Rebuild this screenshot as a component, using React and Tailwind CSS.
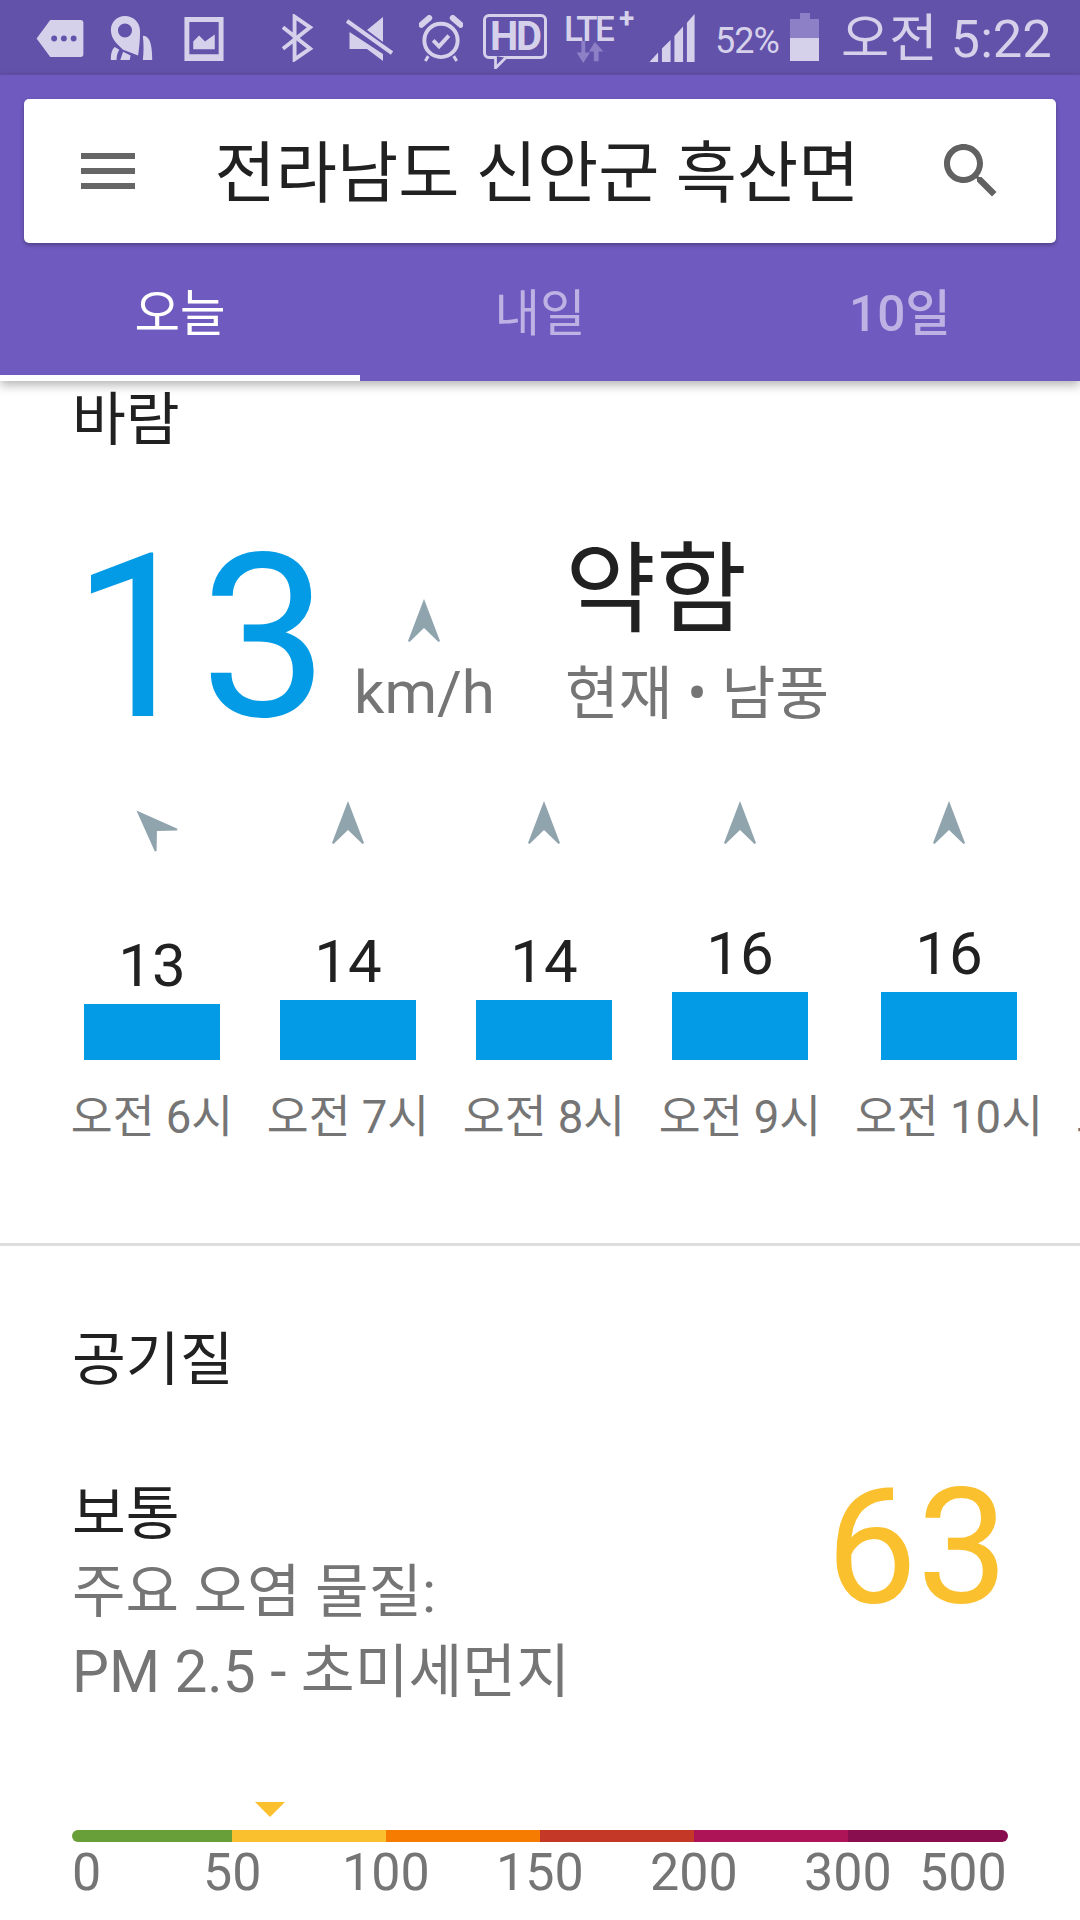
const FONT = "font-['Roboto','Noto_Sans_CJK_KR',sans-serif]";

function Arrow({ className = "", rotate = 0 }) {
  return (
    <svg viewBox="0 0 36 46" className={className} style={{ transform: `rotate(${rotate}deg)` }}>
      <path d="M18 1 L34 43 L32.5 44 L18 30 L3.5 44 L2 43 Z" fill="#90A4AE" />
    </svg>
  );
}

function StatusIcons() {
  const c = "#D6D1EA";
  return (
    <>
      <svg viewBox="0 0 50 40" className="absolute left-[35px] top-[19px] w-[50px] h-[39px]">
        <path d="M15 1 H46 a3 3 0 0 1 3 3 V36 a3 3 0 0 1 -3 3 H15 L1 20 Z" fill={c} />
        <circle cx="19" cy="20" r="3" fill="#6252AA" /><circle cx="29" cy="20" r="3" fill="#6252AA" /><circle cx="39" cy="20" r="3" fill="#6252AA" />
      </svg>
      <svg viewBox="0 0 46 50" className="absolute left-[110px] top-[15px] w-[45px] h-[47px]">
        <path fillRule="evenodd" d="M15 1 C6 1 0 8 0 16 C0 26 8 32 13 37 L29 43 C30 35 31 28 31 17 C31 8 24 1 15 1 Z M15 9 a7.5 7.5 0 1 1 0 15 a7.5 7.5 0 0 1 0 -15 Z" fill={c} />
        <path d="M34 22 C41 22 44 30 44 48 H34 C35 40 35 30 34 22 Z M4 34 C0 38 0 44 0 48 H6 C6 44 7 40 9 37 Z M13 39 L10 48 H20 L21 43 Z" fill={c} />
      </svg>
      <svg viewBox="0 0 40 45" className="absolute left-[184px] top-[17px] w-[40px] h-[44px]">
        <path fillRule="evenodd" d="M0 0 H40 V45 H0 Z M5 5 V38 H35 V5 Z" fill={c} />
        <path d="M9 33 V25 L15 19 L21 25 L31 18 V33 Z" fill={c} />
      </svg>
      <svg viewBox="0 0 34 48" className="absolute left-[281px] top-[14px] w-[33px] h-[48px]" fill="none" stroke={c} strokeWidth="4">
        <path d="M2 13 L30 35 L14 46 V2 L30 13 L2 35" />
      </svg>
      <svg viewBox="0 0 47 46" className="absolute left-[346px] top-[16px] w-[47px] h-[46px]">
        <path d="M37 1 V26 L21 14 Z M3.5 16 V33 H21 L37 45 V38 L3.5 16 Z" fill={c} />
        <path d="M1 5 L46 37" stroke={c} strokeWidth="4" />
      </svg>
      <svg viewBox="0 0 44 48" className="absolute left-[419px] top-[15px] w-[44px] h-[47px]" fill="none" stroke={c}>
        <circle cx="22" cy="26" r="17" strokeWidth="4" />
        <path d="M14 26 L20 32 L30 21" strokeWidth="4" />
        <path d="M2 10 L10 3 M34 3 L42 10" strokeWidth="6" strokeLinecap="round" />
        <path d="M9 42 L6 47 M35 42 L38 47" strokeWidth="3" />
      </svg>
      <div className="absolute left-[483px] top-[14px] w-[64px] h-[45px] border-[3px] border-[#D6D1EA] rounded-[6px] flex items-center justify-center text-[#D6D1EA] text-[40px] font-bold leading-none tracking-[-2px] font-['Roboto',sans-serif]">HD</div>
      <svg viewBox="0 0 16 14" className="absolute left-[494px] top-[56px] w-[16px] h-[13px]">
        <path d="M1 0 V13 L12 2" fill="#6252AA" stroke={c} strokeWidth="3" />
      </svg>
      <div className="absolute left-[564px] top-[13px] text-[#D6D1EA] text-[35px] font-medium leading-[34px] tracking-[-2.5px] font-['Roboto',sans-serif]">LTE</div>
      <div className="absolute left-[619px] top-[5px] text-[#D6D1EA] text-[28px] font-bold leading-[28px] font-['Roboto',sans-serif]">+</div>
      <svg viewBox="0 0 28 24" className="absolute left-[576px] top-[41px] w-[28px] h-[23px]">
        <path d="M9 0 V12 H14 L7 23 L0 12 H5 V0 Z" fill="#8D80C6" />
        <path d="M19 1 L28 11 H23 V21 H18 V11 H13 Z" fill="#8D80C6" />
      </svg>
      <svg viewBox="0 0 48 50" className="absolute left-[649px] top-[14px] w-[47px] h-[48px]" fill={c}>
        <path d="M0 50 L9 40 V50 Z M13 36 L22 27 V50 H13 Z M26 23 L35 13 V50 H26 Z M39 9 L47 0 V50 H39 Z" />
      </svg>
      <div className="absolute left-[715px] top-[22px] text-[#D6D1EA] text-[36px] leading-[38px] tracking-[-1px] font-['Roboto',sans-serif]">52%</div>
      <div className="absolute left-[790px] top-[13px] w-[29px] h-[48px] flex flex-col items-center">
        <div className="w-[10px] h-[6px] bg-[#8D80C6]" />
        <div className="w-[29px] h-[19px] bg-[#8D80C6]" />
        <div className="w-[29px] h-[23px] bg-[#D6D1EA]" />
      </div>
      <div className={`absolute left-[841px] top-[11px] text-[#D6D1EA] text-[52.5px] leading-[56px] whitespace-nowrap ${FONT}`}>오전 5:22</div>
    </>
  );
}

function Hour({ value, label, h, rotate, w }) {
  return (
    <div className={`flex flex-col items-center shrink-0 ${w}`}>
      <div className="h-[70px] flex items-start justify-center">
        <Arrow className={rotate ? "w-[46px] h-[46px] mt-[1px]" : "w-[36px] h-[46px] -mt-[2px]"} rotate={rotate} />
      </div>
      <div className="h-[188px] flex flex-col justify-end items-center w-full">
        <div className="text-[#212121] text-[60px] leading-[64px]">{value}</div>
        <div className="w-[136px] bg-[#039BE5] mt-[6px]" style={{ height: h }} />
      </div>
      <div className="text-[#757575] text-[45.5px] leading-[54px] mt-[31px] whitespace-nowrap">{label}</div>
    </div>
  );
}

const hours = [
  { value: "13", label: "오전 6시", h: 56, rotate: -45, w: "w-[196px]" },
  { value: "14", label: "오전 7시", h: 60, w: "w-[196px]" },
  { value: "14", label: "오전 8시", h: 60, w: "w-[196px]" },
  { value: "16", label: "오전 9시", h: 68, w: "w-[196px]" },
  { value: "16", label: "오전 10시", h: 68, w: "w-[222px]" },
  { value: "17", label: "오전 11시", h: 72, w: "w-[220px]" },
];

const scale = [
  ["#689F38", 160], ["#FBC02D", 154], ["#F57C00", 154], ["#C43828", 154], ["#AD1457", 154], ["#880E4F", 160],
];

export default function App() {
  return (
    <div className={`w-[1080px] h-[1920px] overflow-hidden bg-white relative flex flex-col ${FONT}`}>
      <div className="h-[75px] shrink-0 bg-[#6252AA] relative"><StatusIcons /></div>
      <div className="h-[306px] shrink-0 bg-[#6F5BBF] relative flex flex-col shadow-[0_4px_10px_rgba(0,0,0,0.3)] z-10">
        <div className="mx-[24px] mt-[24px] h-[144px] bg-white rounded-[5px] shadow-[0_2px_4px_rgba(0,0,0,0.3)] flex items-center">
          <svg viewBox="0 0 54 36" className="ml-[57px] w-[54px] h-[36px] shrink-0" fill="#666666">
            <rect width="54" height="6" y="0" /><rect width="54" height="6" y="15" /><rect width="54" height="6" y="30" />
          </svg>
          <div className="flex-1 text-center text-[#212121] text-[66.5px] leading-[72px] pt-[6px] pl-[4px] whitespace-nowrap">전라남도 신안군 흑산면</div>
          <svg viewBox="0 0 24 24" className="mr-[49px] w-[72px] h-[72px] shrink-0" fill="#616161">
            <path d="M15.5 14h-.79l-.28-.27C15.41 12.59 16 11.11 16 9.5 16 5.91 13.09 3 9.5 3S3 5.91 3 9.5 5.91 16 9.5 16c1.61 0 3.09-.59 4.23-1.57l.27.28v.79l5 4.99L20.49 19l-4.99-5zm-6 0C7.01 14 5 11.99 5 9.5S7.01 5 9.5 5 14 7.01 14 9.5 11.99 14 9.5 14z" />
          </svg>
        </div>
        <div className="flex-1 flex relative">
          <div className="w-[360px] flex items-center justify-center text-white text-[49.5px] pt-[10px] border-b-[6px] border-white">오늘</div>
          <div className="w-[360px] flex items-center justify-center text-[#BDB2E3] text-[49.5px] pt-[10px] pb-[6px]">내일</div>
          <div className="w-[360px] flex items-center justify-center text-[#BDB2E3] text-[49.5px] font-medium pt-[10px] pb-[6px]">10일</div>
        </div>
      </div>

      <div className="flex flex-col">
        <div className="pl-[72px] text-[#212121] text-[58.5px] leading-[64px] pt-[7px]">바람</div>

        <div className="pl-[72px] h-[226px] mt-[72px] flex">
          <div className="text-[#039BE5] text-[228px] leading-[226px] pt-[1px] w-[268px] whitespace-nowrap">13</div>
          <div className="w-[225px] shrink-0 relative flex flex-col items-start justify-end pb-[25px]">
            <Arrow className="w-[36px] h-[46px] absolute left-[66px] top-[74px]" />
            <div className="text-[#757575] text-[60px] leading-[64px] whitespace-nowrap ml-[14px]">km/h</div>
          </div>
          <div className="flex flex-col">
            <div className="text-[#212121] text-[99px] leading-[100px] mt-[16px]">약함</div>
            <div className="text-[#757575] text-[58.5px] leading-[64px] mt-[22px] whitespace-nowrap">현재 • 남풍</div>
          </div>
        </div>

        <div className="flex mt-[52px] pl-[54px] w-[1400px]">
          {hours.map((x, i) => <Hour key={i} {...x} />)}
        </div>

        <div className="h-[3px] bg-[#DDDDDD] mt-[98px]" />

        <div className="pl-[72px] text-[#212121] text-[58.5px] leading-[64px] mt-[82px]">공기질</div>

        <div className="px-[72px] flex justify-between mt-[90px]">
          <div className="flex flex-col">
            <div className="text-[#212121] text-[58.5px] leading-[64px]">보통</div>
            <div className="text-[#757575] text-[58.2px] leading-[80px] mt-[6px]">주요 오염 물질:</div>
            <div className="text-[#757575] text-[58.5px] leading-[80px]">PM 2.5 - 초미세먼지</div>
          </div>
          <div className="text-[#FBC02D] text-[162px] leading-[170px] -mt-[20px]">63</div>
        </div>

        <div className="relative mx-[72px] mt-[118px] flex h-[12px]">
          <svg viewBox="0 0 30 15" className="absolute left-[183px] -top-[28px] w-[30px] h-[15px]"><path d="M0 0 H30 L15 15 Z" fill="#FBC02D" /></svg>
          {scale.map(([c, w], i) => (
            <div key={i} className={`h-[12px] ${i === 0 ? "rounded-l-[6px]" : ""} ${i === 5 ? "rounded-r-[6px]" : ""}`} style={{ background: c, width: w }} />
          ))}
        </div>
        <div className="mx-[72px] mt-[1px] h-[60px] text-[#757575] text-[52px] leading-[60px] flex">
          <div className="w-[30px]">0</div>
          <div className="w-[59px] ml-[101px]">50</div>
          <div className="w-[88px] ml-[80px]">100</div>
          <div className="w-[88px] ml-[66px]">150</div>
          <div className="w-[88px] ml-[66px]">200</div>
          <div className="w-[88px] ml-[66px]">300</div>
          <div className="w-[88px] ml-[27px]">500</div>
        </div>
      </div>
    </div>
  );
}
